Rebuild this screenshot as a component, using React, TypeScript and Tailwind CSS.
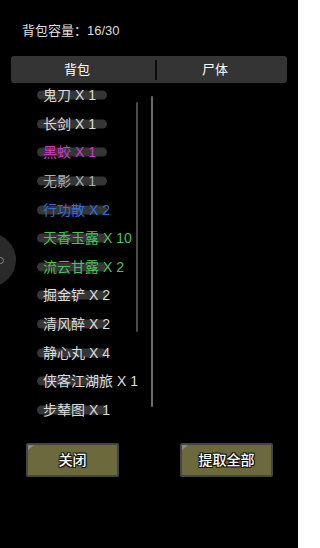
import React from "react";

type Item = { name: string; count: number; color: string };

const items: Item[] = [
  { name: "鬼刀", count: 1, color: "text-[#dcdcdc]" },
  { name: "长剑", count: 1, color: "text-[#dcdcdc]" },
  { name: "黑蛟", count: 1, color: "text-[#c23fc4]" },
  { name: "无影", count: 1, color: "text-[#a9b0b3]" },
  { name: "行功散", count: 2, color: "text-[#2f6fd3]" },
  { name: "天香玉露", count: 10, color: "text-[#4cc25d]" },
  { name: "流云甘露", count: 2, color: "text-[#4cc25d]" },
  { name: "掘金铲", count: 2, color: "text-[#dcdcdc]" },
  { name: "清风醉", count: 2, color: "text-[#dcdcdc]" },
  { name: "静心丸", count: 4, color: "text-[#dcdcdc]" },
  { name: "侠客江湖旅", count: 1, color: "text-[#dcdcdc]" },
  { name: "步辇图", count: 1, color: "text-[#dcdcdc]" },
];

const font = { fontFamily: '"Liberation Sans", "Noto Sans CJK SC", sans-serif' };

// botón oliva con esquina clara
const GameButton = ({ label }: { label: string }) => (
  <div className="relative w-[93px] h-[34px] border-2 border-[#454545] bg-[#6c693c] rounded-[2px] flex items-center justify-center">
    <span className="absolute left-0 top-0 w-0 h-0 border-t-[5px] border-r-[6px] border-t-[#8a8a80] border-r-transparent" />
    <span
      className="text-white text-[14px] font-medium leading-none"
      style={{ textShadow: "0 0 2px #000, 1px 1px 0 #151515, -1px -1px 0 #151515, 1px -1px 0 #151515, -1px 1px 0 #151515" }}
    >
      {label}
    </span>
  </div>
);

export default function App() {
  return (
    <div className="relative w-[298px] h-[548px] bg-black overflow-hidden" style={font}>
      {/* capacidad */}
      <div className="pt-[22px] pl-[22px] text-[13px] leading-[18px] text-[#dedede]">
        背包容量：16/30
      </div>

      {/* pestañas */}
      <div className="mt-[16px] mx-[11px] h-[27px] bg-[#343434] rounded-[3px] flex items-center">
        <div className="w-[144px] pr-[12px] text-center text-[13px] text-white">背包</div>
        <div className="w-[2px] h-[20px] bg-[#0b0b0b]" />
        <div className="flex-1 pr-[14px] text-center text-[13px] text-white">尸体</div>
      </div>

      {/* lista */}
      <div className="relative mt-[5px] h-[335px] overflow-hidden">
        <div className="-mt-[7px]">
          {items.map((it) => (
            <div key={it.name} className="relative h-[28.6px] flex items-center pl-[43px]">
              <span className="absolute left-[37px] top-1/2 -translate-y-1/2 w-[70px] h-[9px] rounded-full bg-[#353535]" />
              <span className={`relative text-[14px] leading-none whitespace-nowrap ${it.color}`}>
                {it.name} X {it.count}
              </span>
            </div>
          ))}
        </div>
        <div className="absolute left-[136px] top-[14px] w-[2px] h-[230px] rounded-full bg-[#4a4a4a]" />
        <div className="absolute left-[151px] top-[8px] w-[2px] h-[311px] rounded-full bg-[#6a6a6a]" />
      </div>

      {/* botones */}
      <div className="mt-[20px] pl-[26px] pr-[25px] flex justify-between">
        <GameButton label="关闭" />
        <GameButton label="提取全部" />
      </div>

      {/* botón flotante */}
      <div className="absolute left-[-38px] top-[233px] w-[54px] h-[54px] rounded-full bg-[#2a2a2a] flex items-center justify-end pr-[12px]">
        <span className="w-[7px] h-[7px] rounded-full border-[1.5px] border-[#8a8a8a]" />
      </div>
    </div>
  );
}
